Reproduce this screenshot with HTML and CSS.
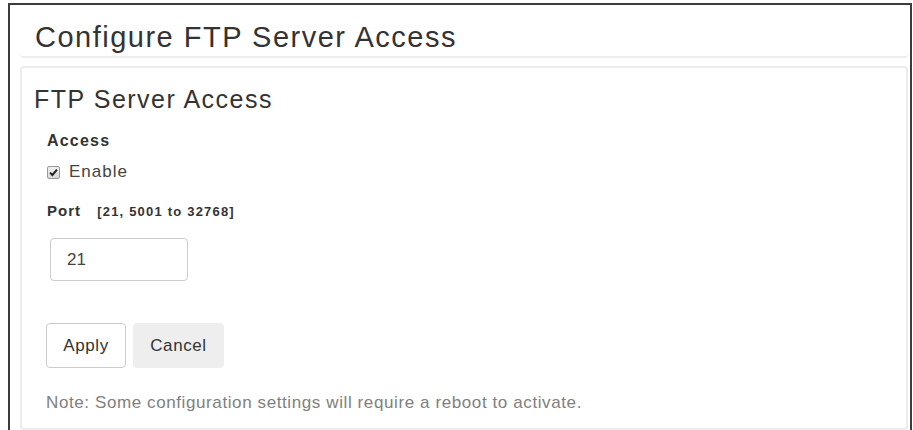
FILE: index.html
```html
<!DOCTYPE html>
<html>
<head>
<meta charset="utf-8">
<link rel="stylesheet" href="styles.css">
</head>
<body>
<div class="frame">
  <div class="page-header">
    <h1>Configure FTP Server Access</h1>
  </div>
  <div class="panel">
    <h2>FTP Server Access</h2>
    <div class="label">Access</div>
    <label class="check">
      <span class="box"><svg width="9" height="9" viewBox="0 0 9 9"><path d="M1 4.6 L3.4 7 L8 1.6" fill="none" stroke="#222" stroke-width="2"/></svg></span>
      <span>Enable</span>
    </label>
    <div class="label port">Port <span class="hint">[21, 5001 to 32768]</span></div>
    <input class="field" type="text" value="21">
    <div class="actions">
      <button class="btn btn-default">Apply</button>
      <button class="btn btn-muted">Cancel</button>
    </div>
    <p class="note">Note: Some configuration settings will require a reboot to activate.</p>
  </div>
</div>
</body>
</html>
```
FILE: styles.css
```css
html, body {
  margin: 0;
  padding: 0;
  background: #fff;
}
body {
  font-family: "Liberation Sans", Arial, sans-serif;
  color: #333;
  overflow: hidden;
}
.frame {
  margin: 3px 1px 0 8px;
  border: 2px solid #3c3c3c;
  border-bottom: none;
  height: 440px;
  padding: 0 2px 0 10px;
  box-sizing: border-box;
}
.page-header {
  border-bottom: 2px solid #eee;
  border-radius: 0 0 4px 4px;
  padding: 16px 0 3px 15px;
}
.page-header h1 {
  margin: 0;
  font-size: 29px;
  font-weight: normal;
  line-height: 32px;
  letter-spacing: 1.5px;
  color: #333;
}
.panel {
  margin-top: 8px;
  border: 2px solid #ececec;
  border-radius: 4px;
  padding: 17px 12px 0 12px;
  height: 364px;
  box-sizing: border-box;
}
.panel h2 {
  margin: 0 0 19px;
  font-size: 25px;
  font-weight: normal;
  line-height: 28px;
  letter-spacing: 1.5px;
}
.label {
  font-weight: bold;
  font-size: 16px;
  line-height: 18px;
  letter-spacing: 1.2px;
  padding-left: 13px;
}
.label.port {
  margin-top: 20px;
  font-size: 15px;
  letter-spacing: 1px;
}
.hint {
  font-size: 13px;
  letter-spacing: 1.2px;
  margin-left: 11px;
}
.check {
  display: flex;
  align-items: center;
  gap: 9px;
  margin: 12px 0 0 13px;
  font-size: 17px;
  line-height: 20px;
  letter-spacing: 1px;
  color: #444;
}
.box {
  width: 11px;
  height: 11px;
  border: 1px solid #9a9a9a;
  border-radius: 2px;
  background: linear-gradient(#f0f0f0, #d8d8d8);
  display: flex;
  align-items: center;
  justify-content: center;
}
.field {
  display: block;
  margin: 17px 0 0 16px;
  width: 138px;
  height: 43px;
  box-sizing: border-box;
  border: 1px solid #ccc;
  border-radius: 4px;
  padding: 0 16px;
  font: 17px "Liberation Sans", Arial, sans-serif;
  color: #444;
}
.actions {
  display: flex;
  gap: 7px;
  margin: 42px 0 0 12px;
}
.btn {
  height: 45px;
  border-radius: 4px;
  font: 17px "Liberation Sans", Arial, sans-serif;
  letter-spacing: 0.6px;
  color: #333;
  padding: 0;
}
.btn-default {
  background: #fff;
  border: 1px solid #ccc;
  width: 80px;
}
.btn-muted {
  background: #eee;
  border: 1px solid #eee;
  width: 91px;
}
.note {
  margin: 25px 0 0 12px;
  font-size: 17px;
  line-height: 20px;
  letter-spacing: 0.6px;
  color: #808080;
}
```
